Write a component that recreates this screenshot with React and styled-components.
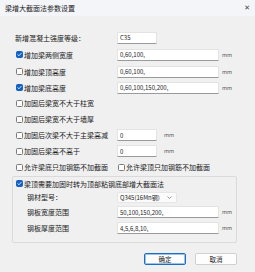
import styled, { createGlobalStyle } from 'styled-components'

const GlobalStyle = createGlobalStyle`
  html, body { margin: 0; padding: 0; }
  body {
    background: #f0f0f0;
    font-family: "Noto Sans CJK SC", "Noto Sans", sans-serif;
  }
`;

const CheckIcon = () => (
  <svg width="5" height="5" viewBox="0 0 10 10">
    <path d="M1.5 5.2 L4 7.6 L8.6 2.4" fill="none" stroke="#fff" strokeWidth="1.6" strokeLinecap="round" strokeLinejoin="round" />
  </svg>
);

const Check = ({ checked, label }) => (
  <CheckWrap>
    <Box $checked={checked}>{checked && <CheckIcon />}</Box>
    <span>{label}</span>
  </CheckWrap>
);

const App = () => {
  return (
    <Window>
      <GlobalStyle />
      <TitleBar>
        <span>梁增大截面法参数设置</span>
        <Close>✕</Close>
      </TitleBar>
      <Body>
        <Row $h={17}>
          <Label>新增混凝土强度等级：</Label>
          <Input $w={40}>C35</Input>
        </Row>
        <Row $h={17}>
          <Label><Check checked label="增加梁两侧宽度" /></Label>
          <Input>0,60,100,</Input>
          <Unit>mm</Unit>
        </Row>
        <Row $h={17}>
          <Label><Check label="增加梁顶高度" /></Label>
          <Input>0,60,100,</Input>
          <Unit>mm</Unit>
        </Row>
        <Row $h={15}>
          <Label><Check checked label="增加梁底高度" /></Label>
          <Input>0,60,100,150,200,</Input>
          <Unit>mm</Unit>
        </Row>
        <Row $h={16}>
          <Check label="加固后梁宽不大于柱宽" />
        </Row>
        <Row $h={16}>
          <Check label="加固后梁宽不大于墙厚" />
        </Row>
        <Row $h={16}>
          <Label><Check label="加固后次梁不大于主梁高减" /></Label>
          <Input $w={40}>0</Input>
          <Unit $gap={7}>mm</Unit>
        </Row>
        <Row $h={16}>
          <Label><Check label="加固后梁高不高于" /></Label>
          <Input $w={40}>0</Input>
          <Unit $gap={7}>mm</Unit>
        </Row>
        <Row $h={16}>
          <Label><Check label="允许梁底只加钢筋不加截面" /></Label>
          <Check label="允许梁顶只加钢筋不加截面" />
        </Row>

        <Group>
          <GroupHead>
            <Check checked label="梁顶需要加固时转为顶部粘钢底部增大截面法" />
          </GroupHead>
          <SubRow $h={14}>
            <SubLabel>钢材型号：</SubLabel>
            <Select>
              <span>Q345(16Mn钢)</span>
              <svg width="5" height="3" viewBox="0 0 10 6">
                <path d="M1 1 L5 5 L9 1" fill="none" stroke="#555" strokeWidth="1.2" />
              </svg>
            </Select>
          </SubRow>
          <SubRow $h={16}>
            <SubLabel>钢板宽度范围</SubLabel>
            <Input>50,100,150,200,</Input>
            <Unit>mm</Unit>
          </SubRow>
          <SubRow $h={16}>
            <SubLabel>钢板厚度范围</SubLabel>
            <Input>4,5,6,8,10,</Input>
            <Unit>mm</Unit>
          </SubRow>
        </Group>

        <Buttons>
          <Button $primary>确定</Button>
          <Button>取消</Button>
        </Buttons>
      </Body>
    </Window>
  )
}

export default App


const Window = styled.div`
width: 255px;
height: 272px;
background: #f0f0f0;
display: flex;
flex-direction: column;
color: #1b1b1b;
font-size: 7px;
overflow: hidden;
`;

const TitleBar = styled.div`
height: 16px;
background: #f3f5f9;
display: flex;
align-items: center;
justify-content: space-between;
padding: 0 5px 0 5px;
font-size: 7px;
color: #222;
`;

const Close = styled.span`
font-size: 7px;
color: #444;
font-family: "DejaVu Sans", sans-serif;
`;

const Body = styled.div`
padding: 13px 18px 0 12px;
display: flex;
flex-direction: column;
`;

const Row = styled.div`
height: ${p => p.$h}px;
display: flex;
align-items: center;
padding-left: 3px;
`;

const Label = styled.div`
width: 102px;
flex-shrink: 0;
display: flex;
align-items: center;
`;

const CheckWrap = styled.label`
display: flex;
align-items: center;
gap: 1px;
white-space: nowrap;
`;

const Box = styled.span`
width: 7px;
height: 7px;
box-sizing: border-box;
border-radius: 1.5px;
display: flex;
align-items: center;
justify-content: center;
background: ${p => p.$checked ? '#0f62c4' : '#fdfdfd'};
border: 1px solid ${p => p.$checked ? '#0f62c4' : '#7a7a7a'};
margin-left: 1px;
`;

const Input = styled.div`
width: ${p => p.$w || 102}px;
height: 12px;
box-sizing: border-box;
background: #fff;
border: 1px solid #e3e3e3;
border-bottom: 1px solid #9a9a9a;
border-radius: 1px;
padding-left: 2px;
display: flex;
align-items: center;
font-size: 6px;
color: #1b1b1b;
flex-shrink: 0;
`;

const Unit = styled.span`
margin-left: ${p => p.$gap || 3}px;
font-size: 5.5px;
color: #555;
`;

const Group = styled.div`
margin-top: 1px;
height: 67px;
box-sizing: border-box;
border: 1px solid #dadada;
border-radius: 2px;
padding-left: 2px;
display: flex;
flex-direction: column;
`;

const GroupHead = styled.div`
height: 13px;
display: flex;
align-items: center;
`;

const SubRow = styled.div`
height: ${p => p.$h}px;
display: flex;
align-items: center;
padding-left: 12px;
`;

const SubLabel = styled.div`
width: 90px;
flex-shrink: 0;
`;

const Select = styled.div`
width: 60px;
height: 11px;
box-sizing: border-box;
background: #fbfbfb;
border: 1px solid #e6e6e6;
border-radius: 2px;
display: flex;
align-items: center;
justify-content: space-between;
padding: 0 4px 0 2px;
font-size: 6px;
`;

const Buttons = styled.div`
margin-top: 10px;
display: flex;
justify-content: flex-end;
gap: 9px;
`;

const Button = styled.button`
width: 42px;
height: 12px;
box-sizing: border-box;
padding: 0;
background: #fdfdfd;
border: 1px solid ${p => p.$primary ? '#1a6fc4' : '#d0d0d0'};
box-shadow: ${p => p.$primary ? 'inset 0 0 0 1px #9cc2ea' : 'none'};
border-radius: 2px;
font-family: "Noto Sans CJK SC", sans-serif;
font-size: 6.5px;
color: #1b1b1b;
line-height: 1;
`;
